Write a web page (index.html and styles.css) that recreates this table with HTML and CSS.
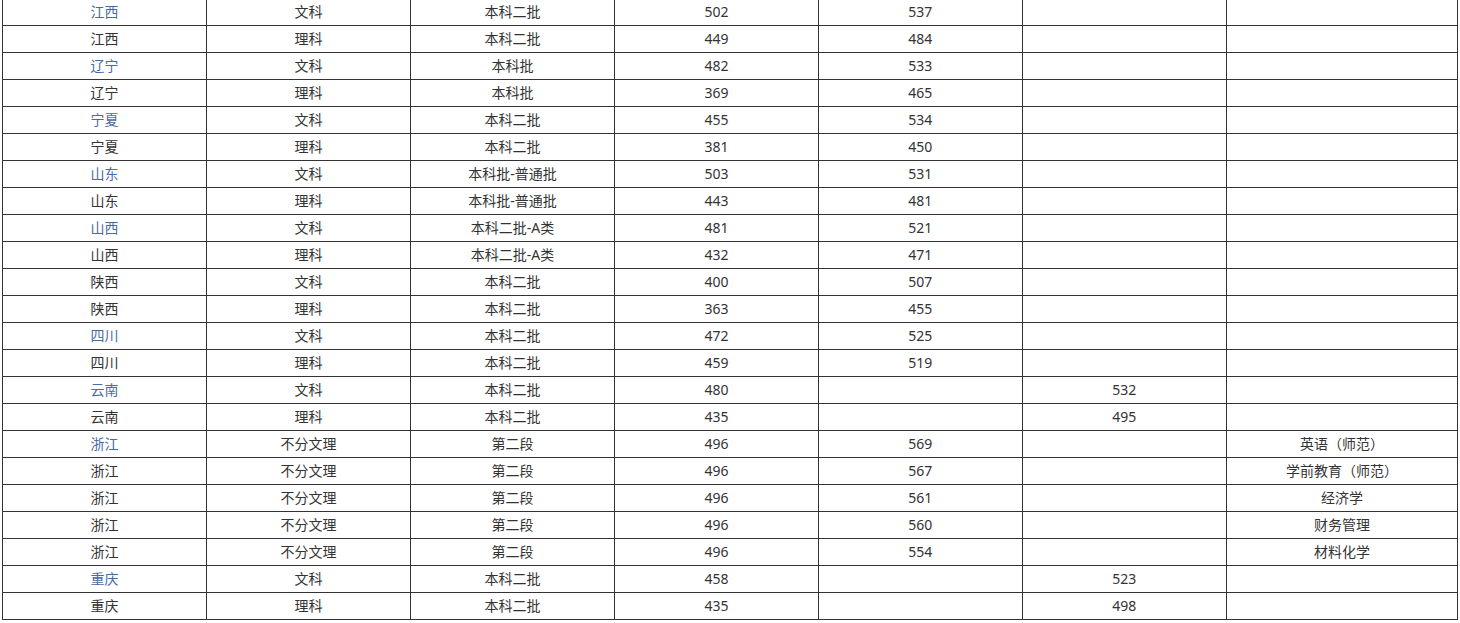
FILE: index.html
```html
<!DOCTYPE html>
<html lang="zh-CN">
<head>
<meta charset="utf-8">
<title>分数线</title>
<link rel="stylesheet" href="styles.css">
</head>
<body>
<table class="scores">
<colgroup>
<col class="c"><col class="c"><col class="c"><col class="c"><col class="c"><col class="c"><col class="last">
</colgroup>
<tbody>
<tr><td class="prov">江西</td><td>文科</td><td>本科二批</td><td>502</td><td>537</td><td></td><td></td></tr>
<tr><td>江西</td><td>理科</td><td>本科二批</td><td>449</td><td>484</td><td></td><td></td></tr>
<tr><td class="prov">辽宁</td><td>文科</td><td>本科批</td><td>482</td><td>533</td><td></td><td></td></tr>
<tr><td>辽宁</td><td>理科</td><td>本科批</td><td>369</td><td>465</td><td></td><td></td></tr>
<tr><td class="prov">宁夏</td><td>文科</td><td>本科二批</td><td>455</td><td>534</td><td></td><td></td></tr>
<tr><td>宁夏</td><td>理科</td><td>本科二批</td><td>381</td><td>450</td><td></td><td></td></tr>
<tr><td class="prov">山东</td><td>文科</td><td>本科批-普通批</td><td>503</td><td>531</td><td></td><td></td></tr>
<tr><td>山东</td><td>理科</td><td>本科批-普通批</td><td>443</td><td>481</td><td></td><td></td></tr>
<tr><td class="prov">山西</td><td>文科</td><td>本科二批-A类</td><td>481</td><td>521</td><td></td><td></td></tr>
<tr><td>山西</td><td>理科</td><td>本科二批-A类</td><td>432</td><td>471</td><td></td><td></td></tr>
<tr><td>陕西</td><td>文科</td><td>本科二批</td><td>400</td><td>507</td><td></td><td></td></tr>
<tr><td>陕西</td><td>理科</td><td>本科二批</td><td>363</td><td>455</td><td></td><td></td></tr>
<tr><td class="prov">四川</td><td>文科</td><td>本科二批</td><td>472</td><td>525</td><td></td><td></td></tr>
<tr><td>四川</td><td>理科</td><td>本科二批</td><td>459</td><td>519</td><td></td><td></td></tr>
<tr><td class="prov">云南</td><td>文科</td><td>本科二批</td><td>480</td><td></td><td>532</td><td></td></tr>
<tr><td>云南</td><td>理科</td><td>本科二批</td><td>435</td><td></td><td>495</td><td></td></tr>
<tr><td class="prov">浙江</td><td>不分文理</td><td>第二段</td><td>496</td><td>569</td><td></td><td>英语（师范）</td></tr>
<tr><td>浙江</td><td>不分文理</td><td>第二段</td><td>496</td><td>567</td><td></td><td>学前教育（师范）</td></tr>
<tr><td>浙江</td><td>不分文理</td><td>第二段</td><td>496</td><td>561</td><td></td><td>经济学</td></tr>
<tr><td>浙江</td><td>不分文理</td><td>第二段</td><td>496</td><td>560</td><td></td><td>财务管理</td></tr>
<tr><td>浙江</td><td>不分文理</td><td>第二段</td><td>496</td><td>554</td><td></td><td>材料化学</td></tr>
<tr><td class="prov">重庆</td><td>文科</td><td>本科二批</td><td>458</td><td></td><td>523</td><td></td></tr>
<tr><td>重庆</td><td>理科</td><td>本科二批</td><td>435</td><td></td><td>498</td><td></td></tr>
</tbody>
</table>
</body>
</html>
```
FILE: styles.css
```css
html, body {
  margin: 0;
  padding: 0;
  background: #fff;
}
body {
  font-family: "Noto Sans", "Noto Sans CJK SC", sans-serif;
  font-size: 14px;
  color: #333;
}
.scores {
  border-collapse: collapse;
  table-layout: fixed;
  width: 1456px;
  margin: -2px 0 0 2px;
}
.scores col.c {
  width: 203px;
}
.scores col.last {
  width: 230px;
}
.scores td {
  border: 1px solid #333;
  height: 25px;
  padding: 0 0 1px;
  text-align: center;
  vertical-align: middle;
  line-height: 20px;
  white-space: nowrap;
}
.scores td.prov {
  color: #4a6aa3;
}
```
